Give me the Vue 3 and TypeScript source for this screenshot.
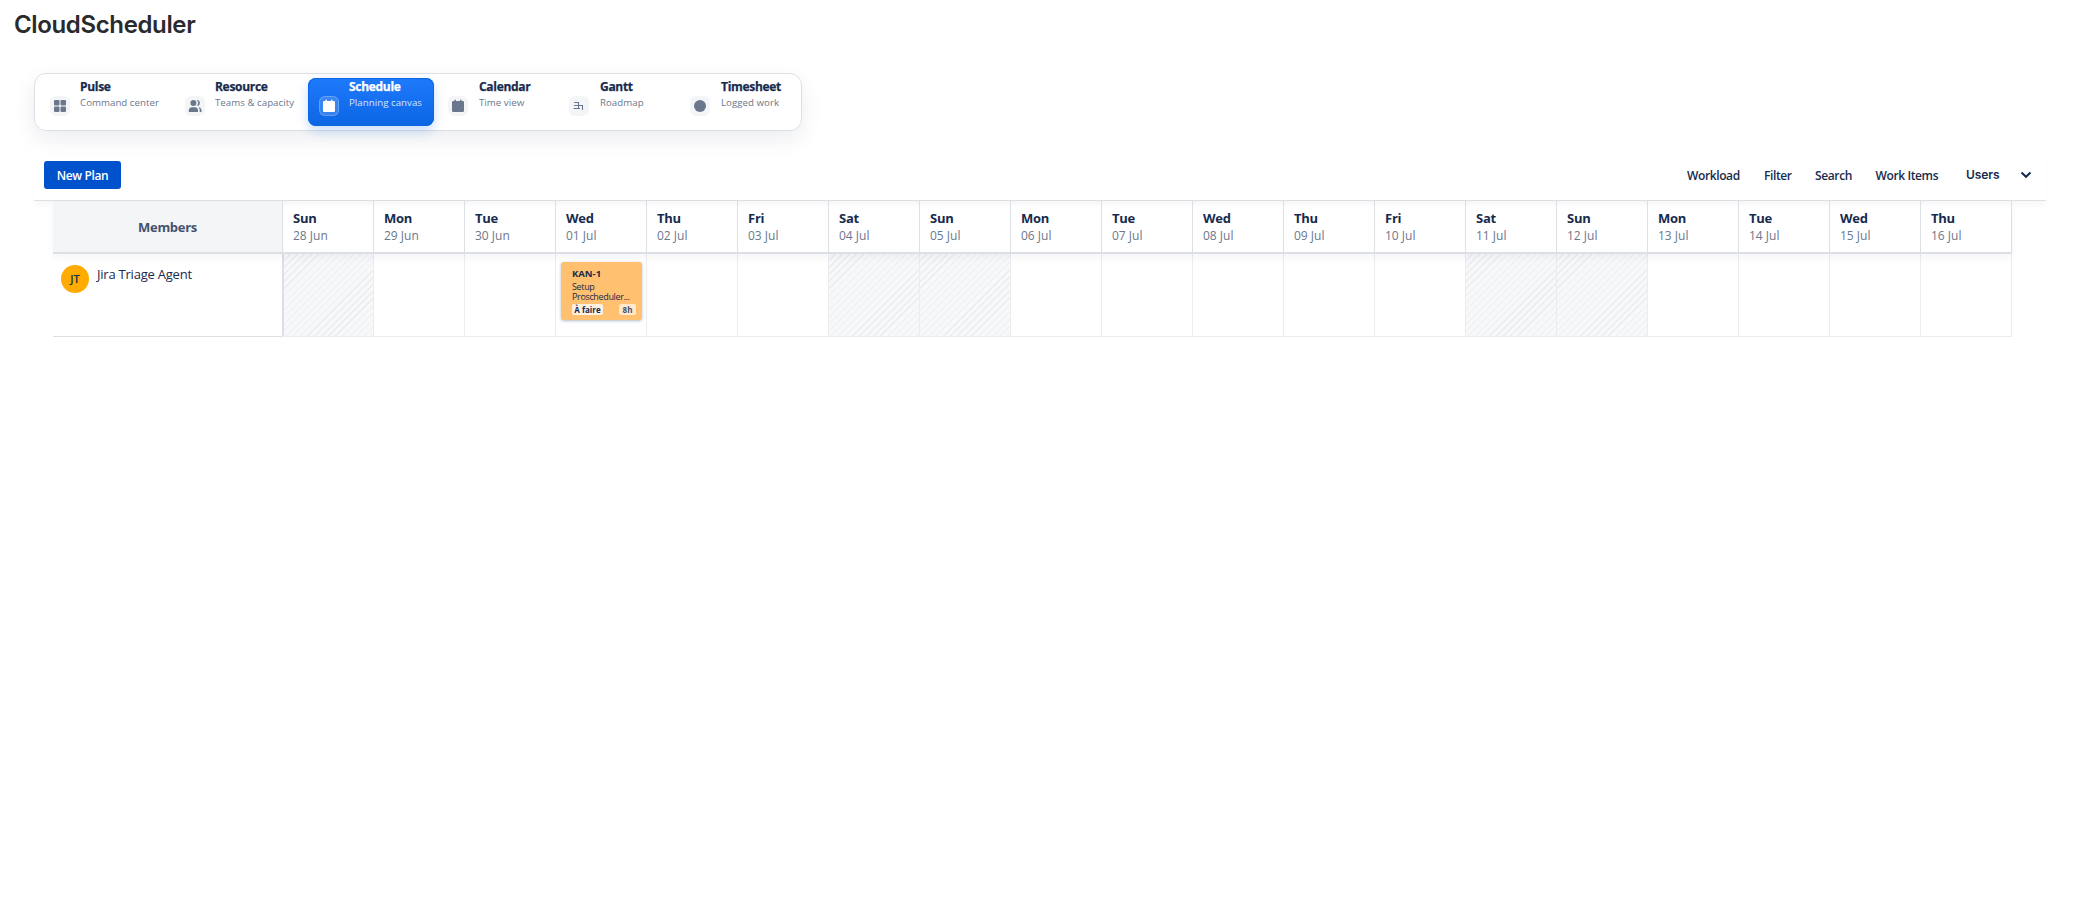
<script setup lang="ts">
interface Tab { title: string; sub: string; icon: string; width: number; active?: boolean }
interface Day { name: string; date: string; off: boolean }

const tabs: Tab[] = [
  { title: 'Pulse', sub: 'Command center', icon: 'grid', width: 131 },
  { title: 'Resource', sub: 'Teams & capacity', icon: 'people', width: 130 },
  { title: 'Schedule', sub: 'Planning canvas', icon: 'calendar', width: 126, active: true },
  { title: 'Calendar', sub: 'Time view', icon: 'calendar', width: 117 },
  { title: 'Gantt', sub: 'Roadmap', icon: 'gantt', width: 117 },
  { title: 'Timesheet', sub: 'Logged work', icon: 'clock', width: 117 },
]

const names = ['Sun', 'Mon', 'Tue', 'Wed', 'Thu', 'Fri', 'Sat']
const days: Day[] = Array.from({ length: 19 }, (_, i) => {
  const d = i < 3 ? 28 + i : i - 2
  return {
    name: names[i % 7],
    date: `${String(d).padStart(2, '0')} ${i < 3 ? 'Jun' : 'Jul'}`,
    off: i % 7 === 0 || i % 7 === 6,
  }
})
const actions = ['Workload', 'Filter', 'Search', 'Work Items']
</script>

<template>
  <div class="page">
    <h1 class="brand">CloudScheduler</h1>
    <nav class="tabs">
      <div v-for="t in tabs" :key="t.title" class="tab" :class="{ active: t.active }" :style="{ width: t.width + 'px' }">
        <span class="icon">
          <svg v-if="t.icon === 'grid'" width="14" height="14" viewBox="0 0 14 14">
            <rect x="1" y="1" width="5.5" height="5.5" rx="1" /><rect x="7.5" y="1" width="5.5" height="5.5" rx="1" />
            <rect x="1" y="7.5" width="5.5" height="5.5" rx="1" /><rect x="7.5" y="7.5" width="5.5" height="5.5" rx="1" />
          </svg>
          <svg v-else-if="t.icon === 'people'" width="14" height="14" viewBox="0 0 14 14">
            <circle cx="5.4" cy="4" r="3" /><path d="M.8 13v-1.500C.8 9.300 2.300 8.300 4.300 8.300h2.400c2 0 3.300 1 3.300 3.200V13z" />
            <path d="M8.800 1a3 3 0 0 1 0 6a4.500 4.500 0 0 0 0-6zM10.500 8.300c1.900.3 3 1.300 3 3.200V13h-1.800v-1.500c0-1.200-.4-2.400-1.200-3.200z" />
          </svg>
          <svg v-else-if="t.icon === 'calendar'" width="14" height="14" viewBox="0 0 14 14">
            <path d="M3.500.7h1.500V2h4V.7h1.500V2h1.300a1.200 1.200 0 0 1 1.200 1.200v8.600a1.200 1.200 0 0 1-1.200 1.200H2.200A1.200 1.200 0 0 1 1 11.800V3.200A1.200 1.200 0 0 1 2.200 2h1.300z" />
          </svg>
          <svg v-else-if="t.icon === 'gantt'" class="thin" width="14" height="14" viewBox="0 0 14 14">
            <path d="M2 3.500h5M2 6.500h9M1.500 9.500H8M6.500 3v7M10.500 6.500V11" />
          </svg>
          <svg v-else width="14" height="14" viewBox="0 0 14 14"><circle cx="7" cy="7" r="6" /></svg>
        </span>
        <span class="labels"><b>{{ t.title }}</b><small>{{ t.sub }}</small></span>
      </div>
    </nav>

    <section class="toolbar">
      <button class="primary">New Plan</button>
      <div class="actions">
        <span v-for="(a, i) in actions" :key="a" class="action" :class="'a' + i">{{ a }}</span>
        <span class="users">Users</span>
        <svg class="chevron" width="12" height="8" viewBox="0 0 12 8"><path d="M1.500 1.500L6 5.800l4.500-4.300" /></svg>
      </div>
    </section>

    <section class="board">
      <div class="head">
        <div class="members">Members</div>
        <div v-for="d in days" :key="d.date" class="day"><b>{{ d.name }}</b><span>{{ d.date }}</span></div>
      </div>
      <div class="row">
        <div class="member"><span class="avatar">JT</span><span class="name">Jira Triage Agent</span></div>
        <div v-for="(d, i) in days" :key="d.date" class="cell" :class="{ off: d.off }">
          <article v-if="i === 3" class="card">
            <b>KAN-1</b>
            <p>Setup<br />Proscheduler...</p>
            <footer><span class="status">À faire</span><span class="hours">8h</span></footer>
          </article>
        </div>
      </div>
    </section>
  </div>
</template>

<style>
body { background: #fff; overflow: hidden; }
</style>

<style scoped>
* { box-sizing: border-box; }
.page { height: 912px; padding: 0 42px 0 34px; color: #172b4d; font-family: "Open Sans", "Noto Sans", sans-serif; white-space: nowrap; }
.brand { margin: 0 0 0 -20px; height: 73px; padding-top: 11px; font: 600 24px/28px Inter, sans-serif; letter-spacing: -0.36px; color: #292a2e; }
.tabs { width: 768px; height: 58px; padding: 4px; display: flex; gap: 4px; border: 1px solid #dcdfe4; border-radius: 12px; box-shadow: 0 8px 22px rgba(9, 30, 66, .08); }
.tab { flex: none; height: 48px; padding-left: 11px; display: flex; gap: 10px; border-radius: 8px; }
.active + .tab { margin-left: -1px; }
.active ~ .tab { gap: 11px; }
.icon { width: 20px; height: 20px; margin-top: 18px; border-radius: 6px; background: #f4f5f7; display: flex; align-items: center; justify-content: center; }
.icon svg { fill: #6b778c; }
.icon .thin { fill: none; stroke: #6b778c; stroke-width: 1.100; }
.labels { display: flex; flex-direction: column; }
.labels b { font-size: 12px; line-height: 16px; font-weight: 700; letter-spacing: -0.3px; margin-top: 1px; -webkit-text-stroke: .25px currentColor; }
.labels small { font-size: 9.700px; line-height: 14px; font-weight: 500; letter-spacing: .03px; color: #6b778c; margin-top: 1px; }
.active { background: linear-gradient(#1d7afc, #0c66e4); box-shadow: 0 5px 12px rgba(12, 102, 228, .22), inset 0 0 0 1px #0c66e4; color: #fff; }
.active .icon { background: rgba(255, 255, 255, .16); box-shadow: inset 0 0 0 1px rgba(255, 255, 255, .22); }
.active .icon svg { fill: #fff; }
.active .labels small { color: #d5e5fe; }
.toolbar { position: relative; margin-top: 19px; width: 2012px; height: 51px; padding: 0 14px 0 10px; border-bottom: 1px solid #dcdfe4; display: flex; justify-content: space-between; align-items: center; box-shadow: 0 5px 6px -1px rgba(9, 30, 66, .035); }
.primary { width: 77px; height: 28px; padding: 0; border: 0; border-radius: 3px; background: #0052cc; color: #fff; font: 600 12px/29px "Open Sans", sans-serif; letter-spacing: -0.35px; }
.actions { display: flex; align-items: center; font-size: 12px; font-weight: 600; line-height: 16px; letter-spacing: -0.38px; }
.action { margin-top: 1px; }
.a0 { width: 77px; } .a1 { width: 51px; } .a2 { width: 60.500px; } .a3 { width: 90.500px; }
.users { width: 54px; font: 600 12px/16px Inter, sans-serif; letter-spacing: -0.1px; margin-top: -1px; }
.chevron { fill: none; stroke: #172b4d; stroke-width: 2; }
.board { margin-left: 19px; width: 1959px; }
.head { position: relative; display: flex; height: 53px; border-bottom: 2px solid #dcdfe4; border-right: 1px solid #dcdfe4; box-shadow: 0 4px 8px rgba(9, 30, 66, .04); }
.members { width: 229px; background: #f4f5f7; color: #42526e; font-size: 13px; font-weight: 700; text-align: center; line-height: 52px; letter-spacing: -0.3px; }
.day { width: 91px; border-left: 1px solid #dcdfe4; padding: 8px 0 0 10px; display: flex; flex-direction: column; }
.day b { font-size: 13px; line-height: 18px; font-weight: 700; letter-spacing: -0.25px; }
.day span { font-size: 12px; line-height: 17px; color: #6b778c; }
.row { display: flex; height: 83px; border-bottom: 1px solid #ebecf0; border-right: 1px solid #ebecf0; }
.member { width: 229px; height: 83px; border-bottom: 1px solid #dcdfe4; padding: 11px 8px; display: flex; gap: 8px; }
.avatar { width: 28px; height: 28px; border-radius: 50%; background: #ffab00; font-size: 11px; font-weight: 600; line-height: 28px; text-align: center; }
.name { margin-top: -1px; font-size: 13px; line-height: 20px; letter-spacing: -0.22px; }
.cell { width: 91px; border-left: 1px solid #ebecf0; padding: 8px 0 0 5px; }
.member + .cell { border-left: 2px solid #dcdfe4; }
.off { background: repeating-linear-gradient(135deg, #f7f8fa 0 4px, #ebecf0 4px 5px); }
.card { width: 81px; height: 58px; border-radius: 3px; background: #ffc070; padding: 5px 6px 0 11px; box-shadow: 0 1px 3px rgba(9, 30, 66, .3); }
.card b { display: block; font-size: 9.500px; line-height: 14px; font-weight: 700; }
.card p { margin: 1px 0 0; font-size: 9px; line-height: 10px; letter-spacing: -0.35px; }
.card footer { display: flex; justify-content: space-between; margin-top: 2px; font-size: 8px; line-height: 11px; font-weight: 700; }
.status { width: 31px; text-align: center; background: #fff1e0; border-radius: 2px; }
.hours { width: 17px; text-align: center; background: #ffe8cd; color: #42526e; border-radius: 2px; }
</style>
